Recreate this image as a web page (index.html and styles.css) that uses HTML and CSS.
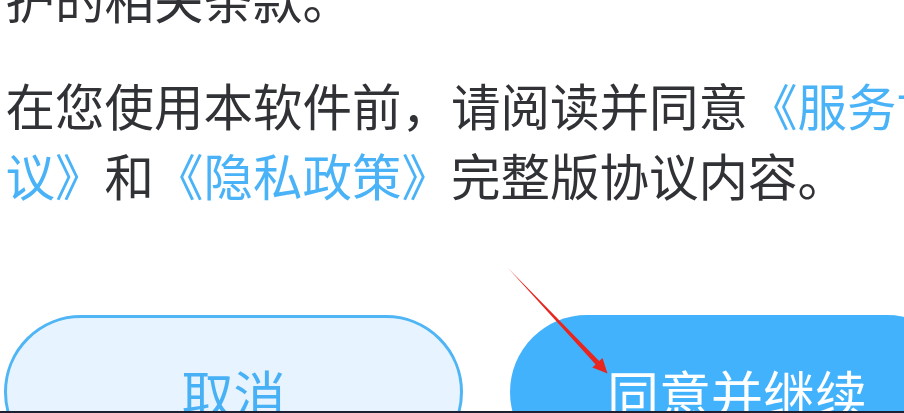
FILE: index.html
```html
<!DOCTYPE html>
<html lang="zh-CN">
<head>
<meta charset="utf-8">
<title>服务协议与隐私政策</title>
<link rel="stylesheet" href="styles.css">
</head>
<body>
<div class="screen">
  <div class="dialog">
    <p class="para para-first">护的相关条款。</p>
    <p class="para">在您使用本软件前，请阅读并同意<a class="link" href="#">《服务协议》</a>和<a class="link" href="#">《隐私政策》</a>完整版协议内容。</p>
    <div class="actions">
      <button class="btn btn-cancel" type="button">取消</button>
      <button class="btn btn-agree" type="button">同意并继续</button>
    </div>
  </div>
  <div class="navbar"></div>
  <svg class="arrow" width="904" height="413" viewBox="0 0 904 413" aria-hidden="true">
    <polygon points="508,268 599.2,361.1 602.5,358 607.5,373.5 592.3,367.6 595.6,364.5" fill="#e8261f"/>
  </svg>
</div>
</body>
</html>
```

FILE: styles.css
```css
* {
  box-sizing: border-box;
}

html, body {
  margin: 0;
  padding: 0;
  background: #ffffff;
}

body {
  width: 904px;
  height: 413px;
  overflow: hidden;
  font-family: "Noto Sans CJK SC", "Noto Sans", sans-serif;
}

.screen {
  position: relative;
  width: 904px;
  height: 413px;
  display: flex;
  flex-direction: column;
  overflow: hidden;
}

.dialog {
  flex: 1;
  min-height: 0;
  overflow: hidden;
  width: 904px;
}

.para {
  width: 951px;
  margin: 0;
  padding-left: 5.5px;
  font-size: 49.5px;
  line-height: 70px;
  color: #303236;
}

.para-first {
  margin-top: -37.5px;
  margin-bottom: 37px;
}

.link {
  color: #4ab3f7;
  text-decoration: none;
}

.actions {
  display: flex;
  gap: 47px;
  width: 980px;
  margin-top: 105.5px;
  padding-left: 4px;
}

.btn {
  flex: 0 0 auto;
  width: 459px;
  height: 154px;
  border-radius: 77px;
  font-family: "Noto Sans CJK SC", "Noto Sans", sans-serif;
  font-size: 52px;
  line-height: normal;
  display: flex;
  align-items: center;
  justify-content: center;
  padding: 0;
  margin: 0;
}

.btn-cancel {
  background: #e7f3fe;
  border: 3px solid #4fb5f5;
  color: #48b1f5;
}

.btn-agree {
  width: 454px;
  background: #42b2fd;
  border: none;
  color: #ffffff;
}

.navbar {
  flex: 0 0 2px;
  height: 2px;
  background: #1c2030;
}

.arrow {
  position: absolute;
  left: 0;
  top: 0;
  pointer-events: none;
}
```
